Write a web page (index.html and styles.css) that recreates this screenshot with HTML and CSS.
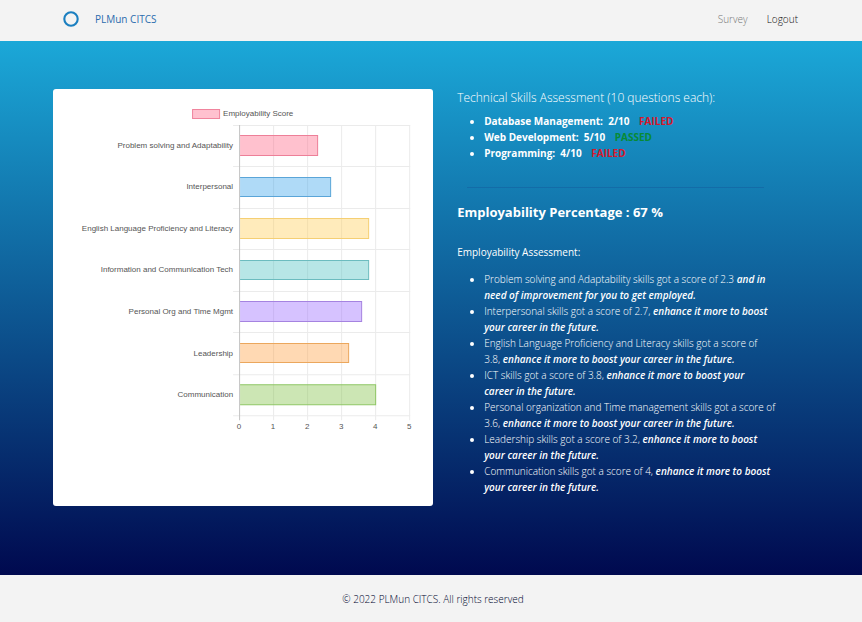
FILE: index.html
```html
<!DOCTYPE html>
<html lang="en">
<head>
<meta charset="utf-8">
<title>PLMun CITCS</title>
<link rel="stylesheet" href="styles.css">
</head>
<body>
<header class="navbar">
  <a class="brand" href="#">
    <svg class="logo" width="16" height="16" viewBox="0 0 16 16" aria-hidden="true"><circle cx="8" cy="8" r="6.7" fill="none" stroke="#1b7fc0" stroke-width="2.1"/></svg>
    <span>PLMun CITCS</span>
  </a>
  <nav class="links">
    <a class="muted" href="#">Survey</a>
    <a href="#">Logout</a>
  </nav>
</header>
<main class="results">
  <section class="card">
    <svg class="chart" viewBox="0 0 380 417" role="img" aria-label="Employability Score">
      <rect x="139.5" y="20.5" width="27" height="9" fill="#ffc1cf" stroke="#f0849d"/>
      <text x="170" y="27">Employability Score</text>
      <g class="grid">
        <path d="M220.500 36V331M254.500 36V331M288.500 36V331M322.500 36V331M356.500 36V331"/>
        <path d="M180 36.500H357M180 77.500H357M180 119.500H357M180 160.500H357M180 202.500H357M180 243.500H357M180 285.500H357M180 326.500H357"/>
      </g>
      <path class="axis" d="M186.500 36V331"/>
      <g class="bars">
        <path d="M187 46.500H264.500V66.500H187" fill="#ff638466" stroke="#ed7f98"/>
        <path d="M187 88.500H277.500V107.500H187" fill="#36a2eb66" stroke="#5aa5d8"/>
        <path d="M187 129.500H315.500V149.500H187" fill="#ffce5666" stroke="#f5cf73"/>
        <path d="M187 171.500H315.500V190.500H187" fill="#4bc0c066" stroke="#6cbcbf"/>
        <path d="M187 212.500H308.500V232.500H187" fill="#9966ff66" stroke="#a583e0"/>
        <path d="M187 254.500H295.500V273.500H187" fill="#ff9f4066" stroke="#eba75d"/>
        <path d="M187 295.500H322.500V315.500H187" fill="#7fc14366" stroke="#8fc665"/>
      </g>
      <g class="names">
        <text x="180" y="59">Problem solving and Adaptability</text>
        <text x="180" y="100">Interpersonal</text>
        <text x="180" y="142">English Language Proficiency and Literacy</text>
        <text x="180" y="183">Information and Communication Tech</text>
        <text x="180" y="225">Personal Org and Time Mgmt</text>
        <text x="180" y="267">Leadership</text>
        <text x="180" y="308">Communication</text>
      </g>
      <g class="ticks">
        <text x="186" y="340">0</text>
        <text x="220" y="340">1</text>
        <text x="254" y="340">2</text>
        <text x="288" y="340">3</text>
        <text x="322" y="340">4</text>
        <text x="356" y="340">5</text>
      </g>
    </svg>
  </section>
  <section class="report">
    <h2 class="title">Technical Skills Assessment (10 questions each):</h2>
    <ul class="skills">
      <li>Database Management:&nbsp; 2/10 <span class="result failed">FAILED</span></li>
      <li>Web Development:&nbsp; 5/10 <span class="result passed">PASSED</span></li>
      <li>Programming:&nbsp; 4/10 <span class="result failed">FAILED</span></li>
    </ul>
    <hr class="rule">
    <h3 class="percentage">Employability Percentage : 67 %</h3>
    <h4 class="subtitle">Employability Assessment:</h4>
    <ul class="assessment">
      <li>Problem solving and Adaptability skills got a score of 2.3 <em>and in need of improvement for you to get employed.</em></li>
      <li>Interpersonal skills got a score of 2.7, <em>enhance it more to boost your career in the future.</em></li>
      <li>English Language Proficiency and Literacy skills got a score of<br>3.8, <em>enhance it more to boost your career in the future.</em></li>
      <li>ICT skills got a score of 3.8, <em>enhance it more to boost your<br>career in the future.</em></li>
      <li>Personal organization and Time management skills got a score of 3.6, <em>enhance it more to boost your career in the future.</em></li>
      <li>Leadership skills got a score of 3.2, <em>enhance it more to boost<br>your career in the future.</em></li>
      <li>Communication skills got a score of 4, <em>enhance it more to boost your career in the future.</em></li>
    </ul>
  </section>
</main>
<footer class="footer">© 2022 PLMun CITCS. All rights reserved</footer>
</body>
</html>
```
FILE: styles.css
```css
* {
  box-sizing: border-box;
}

body {
  margin: 0;
  min-height: 100vh;
  display: flex;
  flex-direction: column;
  font-family: "Open Sans", "Noto Sans", sans-serif;
  font-size: 10px;
  line-height: 16px;
  font-weight: 300;
  color: #fff;
  background: #f3f3f3;
}

a {
  color: inherit;
  text-decoration: none;
}

.navbar {
  display: flex;
  align-items: center;
  justify-content: space-between;
  height: 41px;
  padding: 0 64px 3px 63px;
  background: #f3f3f3;
}

.brand {
  display: flex;
  align-items: center;
  gap: 16px;
  color: #2b6cae;
  font-weight: 400;
}

.logo {
  display: block;
}

.links {
  display: flex;
  gap: 19px;
  color: #111;
}

.links .muted {
  color: #777;
}

.results {
  flex: 1;
  display: grid;
  grid-template-columns: minmax(0, 6fr) minmax(0, 5fr);
  gap: 24px;
  align-items: start;
  padding: 48px 88px 69px 53px;
  background: linear-gradient(#1ba8d8, #00094f);
}

.card {
  background: #fff;
  border-radius: 3px;
}

.chart {
  display: block;
  width: 100%;
  font-family: "Liberation Sans", Arial, sans-serif;
  font-size: 8px;
  font-weight: 400;
  fill: #555;
}

.grid {
  fill: none;
  stroke: #ebebeb;
}

.axis {
  stroke: #c4c4c4;
}

.names {
  text-anchor: end;
}

.ticks {
  text-anchor: middle;
}

.title,
.percentage,
.subtitle {
  margin: 0;
}

.title {
  font-size: 12px;
  line-height: 18px;
  font-weight: 300;
}

.skills,
.assessment {
  margin: 0;
  padding-left: 27px;
}

.skills {
  margin-top: 6px;
  font-weight: 700;
}

.result {
  margin-left: 7px;
}

.failed {
  color: #d6182b;
}

.passed {
  color: #078a35;
}

.rule {
  height: 1px;
  margin: 26px 10px 16px;
  border: 0;
  background: #136ca8;
}

.percentage {
  font-size: 13px;
  font-weight: 700;
}

.subtitle {
  margin: 24px 0 11px;
  font-size: 10px;
  font-weight: 400;
}

.assessment {
  margin-right: -8px;
}

.assessment em {
  font-weight: 600;
}

.footer {
  height: 47px;
  padding: 16px 16px 16px 20px;
  text-align: center;
  color: #00052e;
  background: #f3f3f3;
}
```
